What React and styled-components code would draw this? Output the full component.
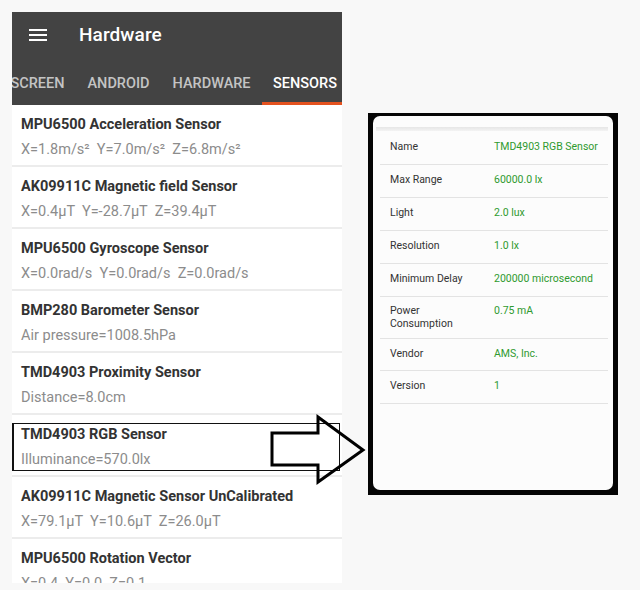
import styled, { createGlobalStyle } from "styled-components";

const GlobalStyle = createGlobalStyle`
  html, body {
    margin: 0;
    padding: 0;
    background: #f8f8f8;
    font-family: Roboto, "Noto Sans", "Liberation Sans", sans-serif;
  }
`;

const Page = styled.div`
  position: relative;
  display: flex;
  align-items: flex-start;
  width: 640px;
  height: 590px;
  padding: 12px 0 0 12px;
  box-sizing: border-box;
  overflow: hidden;
`;

const Phone = styled.div`
  width: 330px;
  height: 571px;
  background: #ffffff;
  overflow: hidden;
  display: flex;
  flex-direction: column;
  flex-shrink: 0;
`;

const AppBar = styled.header`
  background: #434343;
  flex-shrink: 0;
`;

const Toolbar = styled.div`
  height: 48px;
  display: flex;
  align-items: center;
  padding: 0 0 3px 17px;
  box-sizing: border-box;
`;

const MenuButton = styled.svg`
  width: 18px;
  height: 14px;
  display: block;
`;

const Title = styled.h1`
  margin: 0 0 0 32px;
  font-size: 19px;
  font-weight: 500;
  color: #ffffff;
  letter-spacing: 0.1px;
`;

const TabStrip = styled.nav`
  height: 45px;
  display: flex;
  justify-content: flex-end;
  overflow: hidden;
`;

const Tab = styled.div`
  position: relative;
  flex-shrink: 0;
  display: flex;
  align-items: center;
  padding: ${(p) => (p.$active ? "2px 5px 0 11px" : "2px 11.5px 0")};
  font-size: 14.5px;
  font-weight: 500;
  color: ${(p) => (p.$active ? "#ffffff" : "#c4c4c4")};

  &::after {
    content: "";
    display: ${(p) => (p.$active ? "block" : "none")};
    position: absolute;
    left: 0;
    right: 0;
    bottom: 0;
    height: 3px;
    background: #e4521f;
  }
`;

const List = styled.ul`
  list-style: none;
  margin: 0;
  padding: 0;
`;

const Item = styled.li`
  position: relative;
  height: 62px;
  box-sizing: border-box;
  padding: 3px 0 0 9px;
  border-bottom: 2px solid #ececec;
  display: flex;
  flex-direction: column;
  justify-content: center;

  &::after {
    content: "";
    display: ${(p) => (p.$highlighted ? "block" : "none")};
    position: absolute;
    left: 0;
    right: 2px;
    top: 8px;
    bottom: 4px;
    border: 1.5px solid #111;
    border-left-width: 2.5px;
  }
`;

const ItemName = styled.div`
  font-size: 14.5px;
  font-weight: 700;
  color: #333333;
  white-space: nowrap;
`;

const ItemValue = styled.div`
  margin-top: 8px;
  font-size: 14.5px;
  color: #8c8c8c;
  white-space: pre;
`;

const Arrow = styled.svg`
  position: absolute;
  left: 268px;
  top: 413px;
  width: 100px;
  height: 74px;
  overflow: visible;
`;

const Frame = styled.div`
  margin: 101px 0 0 26px;
  width: 250px;
  height: 382px;
  box-sizing: border-box;
  background: #050505;
  padding: 3px 5px 5px 5px;
  flex-shrink: 0;
`;

const Card = styled.div`
  height: 100%;
  background: #fcfcfc;
  border-radius: 7px;
  padding: 11px 5px 0 7px;
  box-sizing: border-box;
`;

const TopShade = styled.div`
  height: 4px;
  margin: 0 0 1px -4px;
  background: linear-gradient(#e6e6e6, #f3f3f3);
`;

const Row = styled.div`
  height: ${(p) => p.$h}px;
  box-sizing: border-box;
  border-bottom: 1px solid #e3e3e3;
  display: grid;
  grid-template-columns: 104px 1fr;
  align-items: ${(p) => (p.$top ? "start" : "center")};
  padding: ${(p) => (p.$top ? "7px 0 0 10px" : "0 0 3px 10px")};
  font-size: 10.5px;
  line-height: 13px;
  white-space: nowrap;
`;

const Label = styled.span`
  color: #333333;
  white-space: pre-line;
`;

const Value = styled.span`
  color: #2f9a2f;
`;

const sensors = [
  ["MPU6500 Acceleration Sensor", "X=1.8m/s²  Y=7.0m/s²  Z=6.8m/s²"],
  ["AK09911C Magnetic field Sensor", "X=0.4μT  Y=-28.7μT  Z=39.4μT"],
  ["MPU6500 Gyroscope Sensor", "X=0.0rad/s  Y=0.0rad/s  Z=0.0rad/s"],
  ["BMP280 Barometer Sensor", "Air pressure=1008.5hPa"],
  ["TMD4903 Proximity Sensor", "Distance=8.0cm"],
  ["TMD4903 RGB Sensor", "Illuminance=570.0lx", true],
  ["AK09911C Magnetic Sensor UnCalibrated", "X=79.1μT  Y=10.6μT  Z=26.0μT"],
  ["MPU6500 Rotation Vector", "X=0.4  Y=0.0  Z=0.1"],
];

const details = [
  ["Name", "TMD4903 RGB Sensor", 33],
  ["Max Range", "60000.0 lx", 33],
  ["Light", "2.0 lux", 33],
  ["Resolution", "1.0 lx", 33],
  ["Minimum Delay", "200000 microsecond", 33],
  ["Power\nConsumption", "0.75 mA", 42, true],
  ["Vendor", "AMS, Inc.", 32],
  ["Version", "1", 33],
];

export default function App() {
  return (
    <>
      <GlobalStyle />
      <Page>
        <Phone>
          <AppBar>
            <Toolbar>
              <MenuButton viewBox="0 0 18 14">
                <rect x="0" y="1" width="18" height="2" fill="#fff" />
                <rect x="0" y="6" width="18" height="2" fill="#fff" />
                <rect x="0" y="11" width="18" height="2" fill="#fff" />
              </MenuButton>
              <Title>Hardware</Title>
            </Toolbar>
            <TabStrip>
              <Tab>SCREEN</Tab>
              <Tab>ANDROID</Tab>
              <Tab>HARDWARE</Tab>
              <Tab $active>SENSORS</Tab>
            </TabStrip>
          </AppBar>
          <List>
            {sensors.map(([name, value, hl]) => (
              <Item key={name} $highlighted={hl}>
                <ItemName>{name}</ItemName>
                <ItemValue>{value}</ItemValue>
              </Item>
            ))}
          </List>
        </Phone>

        <Frame>
          <Card>
            <TopShade />
            {details.map(([label, value, h, top]) => (
              <Row key={label} $h={h} $top={top}>
                <Label>{label}</Label>
                <Value>{value}</Value>
              </Row>
            ))}
          </Card>
        </Frame>

        <Arrow viewBox="0 0 100 74">
          <polygon
            points="4,20 50,20 50,4 95,37 50,69 50,52 4,52"
            fill="none"
            stroke="#000"
            strokeWidth="3"
            strokeLinejoin="miter"
          />
        </Arrow>
      </Page>
    </>
  );
}
